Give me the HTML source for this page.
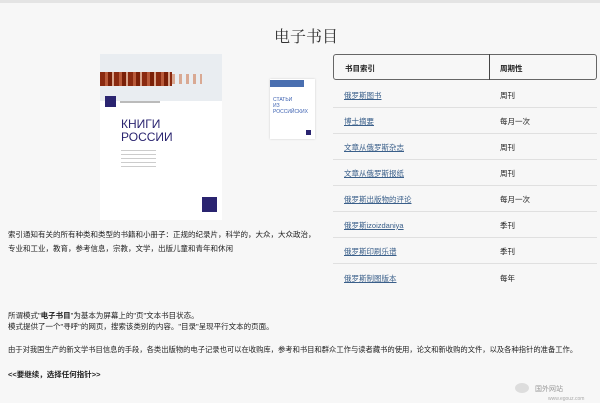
<!DOCTYPE html>
<html><head><meta charset="utf-8"><style>
body{margin:0;width:600px;height:403px;background:#f7f7f7;font-family:"Liberation Sans","Noto Sans CJK SC",sans-serif;color:#222;position:relative;overflow:hidden}
.a{position:absolute}
.t{font-size:7.5px;white-space:nowrap}
a{color:#3a5f8a;text-decoration:underline}
</style></head><body>
<div class="a" style="left:0;top:0;width:600px;height:3px;background:#e4e4e4"></div>
<div class="a" style="left:274px;top:24px;font-family:'Liberation Serif','Noto Serif CJK SC',serif;font-size:16px;color:#333">电子书目</div>

<div class="a" style="left:100px;top:54px;width:122px;height:166px;background:#fff">
 <div class="a" style="left:0;top:0;width:122px;height:47px;background:#e9edf1"></div>
 <div class="a" style="left:0;top:18px;width:72px;height:14px;background:repeating-linear-gradient(90deg,#8a2a10 0 5px,#b85a3a 5px 8px,#7a2008 8px 12px,#d9a38a 12px 14px)"></div>
 <div class="a" style="left:72px;top:20px;width:30px;height:10px;background:repeating-linear-gradient(90deg,#d9a993 0 3px,transparent 3px 7px)"></div>
 <div class="a" style="left:5px;top:42px;width:11px;height:11px;background:#2a2470"></div>
 <div class="a" style="left:20px;top:47px;width:40px;height:2px;background:#bbb"></div>
 <div class="a" style="left:21px;top:64px;font-size:12px;line-height:13px;color:#2a2470">КНИГИ<br>РОССИИ</div>
 <div class="a" style="left:21px;top:96px;width:35px;height:20px;background:repeating-linear-gradient(#ccc 0 1px,transparent 1px 4px)"></div>
 <div class="a" style="left:102px;top:143px;width:15px;height:15px;background:#2a2470"></div>
</div>
<div class="a" style="left:270px;top:79px;width:45px;height:60px;background:#fff;box-shadow:0 0 2px #ccc">
 <div class="a" style="left:0;top:1px;width:34px;height:7px;background:#4a6fb0"></div>
 <div class="a" style="left:3px;top:18px;font-size:5px;color:#3a5fb0;line-height:6px">СТАТЬИ<br>ИЗ РОССИЙСКИХ</div>
 <div class="a" style="left:36px;top:51px;width:5px;height:5px;background:#2a2470"></div>
</div>

<div class="a" style="left:333px;top:54px;width:264px;height:26px;border:1px solid #666;border-radius:3px;box-sizing:border-box"></div>
<div class="a" style="left:489px;top:54px;width:1px;height:26px;background:#444"></div>
<div class="a t" style="left:345px;top:63px;font-weight:bold">书目索引</div>
<div class="a t" style="left:500px;top:63px;font-weight:bold">周期性</div>

<div class="a t" style="left:344px;top:90px"><a>俄罗斯图书</a></div><div class="a t" style="left:500px;top:90px">周刊</div>
<div class="a" style="left:333px;top:107px;width:264px;height:1px;background:#e0e0e0"></div>
<div class="a t" style="left:344px;top:116px"><a>博士摘要</a></div><div class="a t" style="left:500px;top:116px">每月一次</div>
<div class="a" style="left:333px;top:133px;width:264px;height:1px;background:#e0e0e0"></div>
<div class="a t" style="left:344px;top:142px"><a>文章从俄罗斯杂志</a></div><div class="a t" style="left:500px;top:142px">周刊</div>
<div class="a" style="left:333px;top:159px;width:264px;height:1px;background:#e0e0e0"></div>
<div class="a t" style="left:344px;top:168px"><a>文章从俄罗斯报纸</a></div><div class="a t" style="left:500px;top:168px">周刊</div>
<div class="a" style="left:333px;top:185px;width:264px;height:1px;background:#e0e0e0"></div>
<div class="a t" style="left:344px;top:194px"><a>俄罗斯出版物的评论</a></div><div class="a t" style="left:500px;top:194px">每月一次</div>
<div class="a" style="left:333px;top:211px;width:264px;height:1px;background:#e0e0e0"></div>
<div class="a t" style="left:344px;top:220px"><a>俄罗斯izoizdaniya</a></div><div class="a t" style="left:500px;top:220px">季刊</div>
<div class="a" style="left:333px;top:237px;width:264px;height:1px;background:#e0e0e0"></div>
<div class="a t" style="left:344px;top:246px"><a>俄罗斯印刷乐谱</a></div><div class="a t" style="left:500px;top:246px">季刊</div>
<div class="a" style="left:333px;top:263px;width:264px;height:1px;background:#e0e0e0"></div>
<div class="a t" style="left:344px;top:273px"><a>俄罗斯制图版本</a></div><div class="a t" style="left:500px;top:273px">每年</div>

<div class="a t" style="left:8px;top:228px;line-height:14px">索引通知有关的所有种类和类型的书籍和小册子：正规的纪录片，科学的，大众，大众政治，<br>专业和工业，教育，参考信息，宗教，文学，出版儿童和青年和休闲</div>
<div class="a t" style="left:8px;top:310px;line-height:11px">所谓模式"<b>电子书目</b>"为基本为屏幕上的"页"文本书目状态。<br>模式提供了一个"寻呼"的网页，搜索该类别的内容。"目录"呈现平行文本的页面。</div>
<div class="a t" style="left:8px;top:345px;font-size:7.3px">由于对我国生产的新文学书目信息的手段，各类出版物的电子记录也可以在收购库，参考和书目和群众工作与读者藏书的使用，论文和新收购的文件，以及各种指针的准备工作。</div>
<div class="a t" style="left:8px;top:369px;font-weight:bold;color:#222">&lt;&lt;要继续，选择任何指针&gt;&gt;</div>
<div class="a t" style="left:535px;top:384px;color:#999;font-size:7px">国外网站</div>
<div class="a t" style="left:548px;top:396px;color:#aaa;font-size:5px">www.egouz.com</div>
<div class="a" style="left:515px;top:383px;width:14px;height:10px;border-radius:50%;background:#ddd"></div>
</body></html>
